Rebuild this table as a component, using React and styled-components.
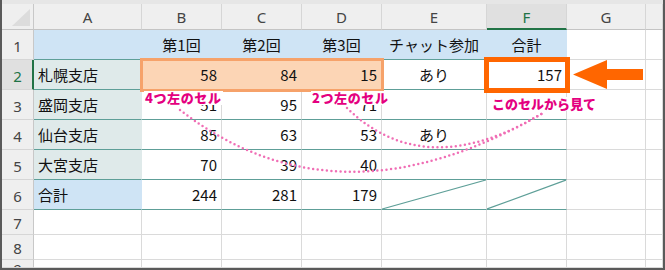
import React from 'react';
import styled, { createGlobalStyle, css } from 'styled-components';

const Global = createGlobalStyle`
  html, body { margin: 0; padding: 0; background: #fff; }
  body { font-family: "Noto Sans CJK JP", "Noto Sans", sans-serif; }
`;

const FILL = { blue: '#cfe4f5', teal: '#dfeaea' };
const GRID = '#dadada';
const TEAL = '#5e9f98';
const HEAD_BG = '#efefef';
const GREEN = '#217346';

const Frame = styled.div`
  position: relative;
  width: 665px;
  height: 270px;
  box-sizing: border-box;
  border: 2px solid #5a5a5a;
  border-top: 0;
  background: #fff;
  overflow: hidden;
`;

const TopStrip = styled.div`
  height: 4px;
  background: #e6e6e6;
`;

const Grid = styled.div`
  display: grid;
  grid-template-columns: 32px 108px 80px 80px 80px 105px 80px 79px 17px;
  grid-template-rows: 26px repeat(6, 30px) 25px 25px 8px;
`;

const Corner = styled.div`
  box-sizing: border-box;
  background: ${HEAD_BG};
  border-right: 1px solid #c8c8c8;
  border-bottom: 1px solid #c4c4c4;
  display: flex;
  align-items: flex-end;
  justify-content: flex-end;
  padding: 0 3px 3px 0;
`;

const Triangle = styled.div`
  width: 18px;
  height: 17px;
  background: #dcdcdc;
  clip-path: polygon(100% 0, 100% 100%, 0 100%);
`;

const ColHead = styled.div`
  box-sizing: border-box;
  display: flex;
  align-items: center;
  justify-content: center;
  background: ${p => (p.$active ? '#e0e0e0' : HEAD_BG)};
  border-right: 1px solid #d6d6d6;
  border-bottom: ${p => (p.$active ? `2px solid ${GREEN}` : '1px solid #c4c4c4')};
  color: ${p => (p.$active ? GREEN : '#444')};
  font: 400 15px/1 "Noto Sans", "DejaVu Sans", sans-serif;
  padding-top: ${p => (p.$active ? '2px' : '1px')};
`;

const RowHead = styled.div`
  box-sizing: border-box;
  display: flex;
  align-items: ${p => (p.$cut ? 'flex-start' : 'center')};
  justify-content: center;
  overflow: hidden;
  background: ${p => (p.$active ? '#e0e0e0' : HEAD_BG)};
  border-right: ${p => (p.$active ? `2px solid ${GREEN}` : '1px solid #c8c8c8')};
  border-bottom: 1px solid #d6d6d6;
  color: ${p => (p.$active ? GREEN : '#444')};
  font: 400 15px/1 "Noto Sans", "DejaVu Sans", sans-serif;
  padding-top: ${p => (p.$cut ? '2px' : '3px')};
  padding-left: ${p => (p.$active ? '1px' : '0')};
`;

const Cell = styled.div`
  box-sizing: border-box;
  display: flex;
  align-items: center;
  justify-content: ${p =>
    p.$align === 'right' ? 'flex-end' : p.$align === 'center' ? 'center' : 'flex-start'};
  padding: 0 4px;
  font-size: 15px;
  line-height: 1;
  color: #111;
  white-space: nowrap;
  background: ${p => (p.$fill ? FILL[p.$fill] : '#fff')};
  border-right: 1px solid ${p => (p.$fill ? FILL[p.$fill] : GRID)};
  border-bottom: 1px solid ${p => (p.$teal ? TEAL : GRID)};
  ${p =>
    p.$focus &&
    css`
      outline: 5px solid #ff6600;
      outline-offset: -2px;
      position: relative;
      z-index: 2;
    `}
`;

const SlashCell = styled.div`
  box-sizing: border-box;
  background: #fff;
  border-right: 1px solid ${GRID};
  border-bottom: 1px solid ${TEAL};
  & > svg {
    display: block;
    width: 100%;
    height: 100%;
  }
`;

const ArrowCell = styled.div`
  box-sizing: border-box;
  display: flex;
  align-items: flex-start;
  padding-left: 6px;
  border-right: 1px solid ${GRID};
  border-bottom: 1px solid ${GRID};
  background: #fff;
`;

const Range = styled.div`
  grid-column: span 3;
  display: grid;
  grid-template-columns: repeat(3, 1fr);
  background: #fcd5b5;
  border-bottom: 1px solid ${TEAL};
  outline: 3px solid #f6a26a;
  outline-offset: -1px;
  position: relative;
  z-index: 1;
`;

const RangeNum = styled.div`
  display: flex;
  align-items: center;
  justify-content: flex-end;
  padding: 0 5px 0 0;
  font-size: 15px;
  line-height: 1;
  color: #111;
`;

const Overlay = styled.div`
  position: absolute;
  inset: 0;
  pointer-events: none;
  z-index: 3;
`;

const Curves = styled.svg`
  position: absolute;
  left: 0;
  top: 0;
`;

const Note = styled.span`
  position: absolute;
  left: ${p => p.$x - 2}px;
  top: ${p => p.$y}px;
  font: 900 13px/14px "Noto Sans CJK JP", "Noto Sans", sans-serif;
  color: #e4007f;
  background: #fff;
  letter-spacing: ${p => p.$ls || 0}px;
  padding: 0 1px;
  white-space: nowrap;
`;

const Slash = () => (
  <svg viewBox="0 0 100 100" preserveAspectRatio="none">
    <line x1="0" y1="100" x2="100" y2="0" stroke={TEAL} strokeWidth="1.2" vectorEffect="non-scaling-stroke" />
  </svg>
);

const Arrow = () => (
  <svg width="72" height="29" viewBox="0 0 72 29">
    <path d="M0 14.5 L34 0 L34 9 L70 9 L70 20 L34 20 L34 29 Z" fill="#ff6600" />
  </svg>
);

const cols = ['A', 'B', 'C', 'D', 'E', 'F', 'G', ''];

const body = [
  { name: '盛岡支店', v: ['51', '95', '71'], e: '' },
  { name: '仙台支店', v: ['85', '63', '53'], e: 'あり' },
  { name: '大宮支店', v: ['70', '39', '40'], e: '' },
];

const Tail = () => (
  <>
    <Cell />
    <Cell />
  </>
);

export default function App() {
  return (
    <>
      <Global />
      <Frame>
        <TopStrip />
        <Grid>
          <Corner>
            <Triangle />
          </Corner>
          {cols.map((c, i) => (
            <ColHead key={i} $active={c === 'F'}>
              {c}
            </ColHead>
          ))}

          {/* row 1 */}
          <RowHead>1</RowHead>
          <Cell $fill="blue" $teal />
          {['第1回', '第2回', '第3回', 'チャット参加', '合計'].map(t => (
            <Cell key={t} $fill="blue" $teal $align="center">
              {t}
            </Cell>
          ))}
          <Tail />

          {/* row 2 */}
          <RowHead $active>2</RowHead>
          <Cell $fill="teal" $teal>札幌支店</Cell>
          <Range>
            <RangeNum>58</RangeNum>
            <RangeNum>84</RangeNum>
            <RangeNum>15</RangeNum>
          </Range>
          <Cell $teal $align="center">あり</Cell>
          <Cell $teal $align="right" $focus>157</Cell>
          <ArrowCell>
            <Arrow />
          </ArrowCell>
          <Cell />

          {/* rows 3-5 */}
          {body.map((r, i) => (
            <React.Fragment key={r.name}>
              <RowHead>{i + 3}</RowHead>
              <Cell $fill="teal" $teal>{r.name}</Cell>
              {r.v.map((n, j) => (
                <Cell key={j} $teal $align="right">{n}</Cell>
              ))}
              <Cell $teal $align="center">{r.e}</Cell>
              <Cell $teal />
              <Tail />
            </React.Fragment>
          ))}

          {/* row 6 */}
          <RowHead>6</RowHead>
          <Cell $fill="blue" $teal>合計</Cell>
          <Cell $teal $align="right">244</Cell>
          <Cell $teal $align="right">281</Cell>
          <Cell $teal $align="right">179</Cell>
          <SlashCell><Slash /></SlashCell>
          <SlashCell><Slash /></SlashCell>
          <Tail />

          {/* rows 7-9 */}
          {[7, 8, 9].map(n => (
            <React.Fragment key={n}>
              <RowHead $cut={n === 9}>{n}</RowHead>
              {cols.map((c, i) => (
                <Cell key={i} />
              ))}
            </React.Fragment>
          ))}
        </Grid>

        <Overlay>
          <Curves width="661" height="268" viewBox="2 0 661 268">
            <g fill="none" stroke="#f06eb5" strokeWidth="2.5" strokeLinecap="round" strokeDasharray="0 4.6">
              <path d="M180 110 Q338 232 543 113" />
              <path d="M347 108 Q425 184 543 113" />
            </g>
          </Curves>
          <Note $x={144} $y={91} $ls={0.6}>4つ左のセル</Note>
          <Note $x={311} $y={91} $ls={0.6}>2つ左のセル</Note>
          <Note $x={491} $y={97}>このセルから見て</Note>
        </Overlay>
      </Frame>
    </>
  );
}
